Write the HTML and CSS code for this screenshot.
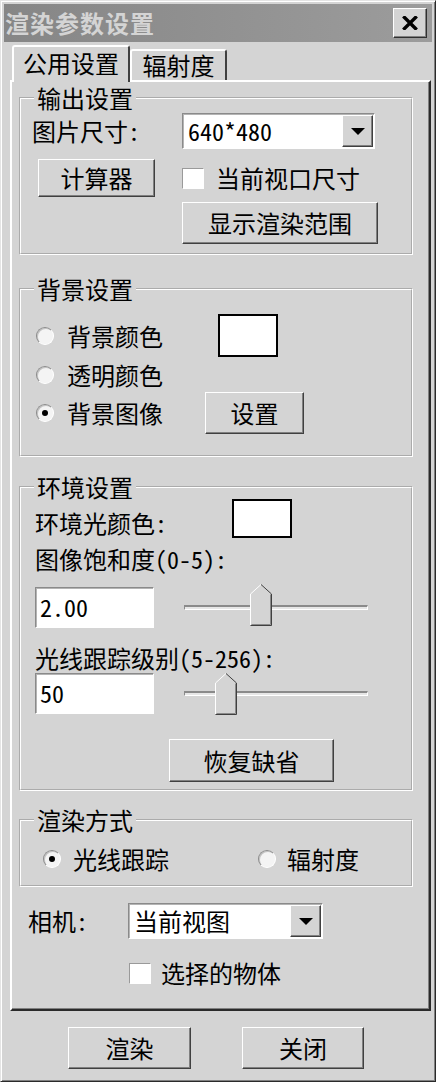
FILE: index.html
```html
<!DOCTYPE html>
<html lang="zh-CN">
<head>
<meta charset="utf-8">
<title>渲染参数设置</title>
<link rel="stylesheet" href="styles.css">
</head>
<body>
<div class="window">
  <div class="titlebar">
    <span class="title">渲染参数设置</span>
    <span class="close-btn">
      <svg width="16" height="14" viewBox="0 0 16 14"><path d="M2.5 1.5 L13.5 12.5 M13.5 1.5 L2.5 12.5" stroke="#000" stroke-width="3.4" stroke-linecap="square"/></svg>
    </span>
  </div>

  <div class="tabs">
    <div class="tab tab-active">公用设置</div>
    <div class="tab tab-2">辐射度</div>
  </div>

  <div class="panel">
    <fieldset class="group g1">
      <legend>输出设置</legend>
      <div class="body b1">
        <div class="row r1a">
          <span class="lbl w-size">图片尺寸:</span>
          <div class="combo combo-size">
            <span class="combo-val">640*480</span>
            <span class="drop"><svg width="14" height="7" viewBox="0 0 14 7"><polygon points="0,0 14,0 7,7" fill="#000"/></svg></span>
          </div>
        </div>
        <div class="row r1b">
          <span class="btn btn-calc">计算器</span>
          <span class="chk chk-view"></span>
          <span class="chk-label">当前视口尺寸</span>
        </div>
        <div class="row r1c">
          <span class="btn btn-show">显示渲染范围</span>
        </div>
      </div>
    </fieldset>

    <fieldset class="group g2">
      <legend>背景设置</legend>
      <div class="body b2">
        <div class="row r2a">
          <span class="opt opt-w1"><span class="radio"></span><span class="opt-text">背景颜色</span></span>
          <span class="swatch swatch-bg"></span>
        </div>
        <div class="row r2b">
          <span class="opt"><span class="radio"></span><span class="opt-text">透明颜色</span></span>
        </div>
        <div class="row r2c">
          <span class="opt opt-w3"><span class="radio on"></span><span class="opt-text">背景图像</span></span>
          <span class="btn btn-set">设置</span>
        </div>
      </div>
    </fieldset>

    <fieldset class="group g3">
      <legend>环境设置</legend>
      <div class="body b3">
        <div class="row r3a">
          <span class="lbl w-amb amb-label">环境光颜色:</span>
          <span class="swatch swatch-amb"></span>
        </div>
        <div class="row r3b">
          <span class="lbl">图像饱和度(0-5):</span>
        </div>
        <div class="row r3c">
          <span class="edit">2.00</span>
          <div class="slider">
            <div class="track"></div>
            <svg class="thumb thumb-a" style="left:66px" width="22" height="42" viewBox="0 0 22 42">
              <polygon points="0.5,10 11,0.5 21.5,10 21.5,41.5 0.5,41.5" fill="#d4d4d4"/>
              <polyline points="0.5,41 0.5,10 11,0.5" fill="none" stroke="#fff"/>
              <polyline points="11,0.5 21.5,10 21.5,41.5 0.5,41.5" fill="none" stroke="#404040"/>
              <polyline points="20.5,10.5 20.5,40.5 1.5,40.5" fill="none" stroke="#8a8a8a"/>
            </svg>
          </div>
        </div>
        <div class="row r3d">
          <span class="lbl">光线跟踪级别(5-256):</span>
        </div>
        <div class="row r3e">
          <span class="edit">50</span>
          <div class="slider">
            <div class="track"></div>
            <svg class="thumb thumb-b" style="left:31px" width="22" height="42" viewBox="0 0 22 42">
              <polygon points="0.5,10 11,0.5 21.5,10 21.5,41.5 0.5,41.5" fill="#d4d4d4"/>
              <polyline points="0.5,41 0.5,10 11,0.5" fill="none" stroke="#fff"/>
              <polyline points="11,0.5 21.5,10 21.5,41.5 0.5,41.5" fill="none" stroke="#404040"/>
              <polyline points="20.5,10.5 20.5,40.5 1.5,40.5" fill="none" stroke="#8a8a8a"/>
            </svg>
          </div>
        </div>
        <div class="row r3f">
          <span class="btn btn-reset">恢复缺省</span>
        </div>
      </div>
    </fieldset>

    <fieldset class="group g4">
      <legend>渲染方式</legend>
      <div class="body b4">
        <div class="row r4a">
          <span class="opt opt-w4"><span class="radio on"></span><span class="opt-text opt-text-sm">光线跟踪</span></span>
          <span class="opt"><span class="radio"></span><span class="opt-text opt-text-xs">辐射度</span></span>
        </div>
      </div>
    </fieldset>

    <div class="row cam-row">
      <span class="lbl w-cam">相机:</span>
      <div class="combo combo-cam">
        <span class="combo-val">当前视图</span>
        <span class="drop"><svg width="14" height="7" viewBox="0 0 14 7"><polygon points="0,0 14,0 7,7" fill="#000"/></svg></span>
      </div>
    </div>
    <div class="row sel-row">
      <span class="chk chk-sel"></span>
      <span class="chk-label sel-label">选择的物体</span>
    </div>
  </div>

  <div class="footer">
    <span class="btn btn-render">渲染</span>
    <span class="btn btn-close">关闭</span>
  </div>
</div>
</body>
</html>
```

FILE: styles.css
```css
* { box-sizing: border-box; }
html, body { margin: 0; padding: 0; }
body {
  background: #d4d4d4;
  font-family: "Noto Sans Mono CJK SC", "Noto Sans CJK SC", "Noto Sans", sans-serif;
  font-size: 24px;
  line-height: 28px;
  color: #000;
}

.window {
  width: 436px;
  height: 1082px;
  border: 1px solid;
  border-color: #e4e4e4 #2a2a2a #2a2a2a #e4e4e4;
  box-shadow: inset 1px 1px 0 #fff, inset -1px -1px 0 #808080;
  padding: 3px 3px 0 3px;
  overflow: hidden;
}

/* title bar */
.titlebar {
  height: 38px;
  background: linear-gradient(to right, #868686, #9c9c9c);
  display: flex;
  align-items: center;
  justify-content: space-between;
  padding: 0 5px 0 1px;
}
.title {
  font-weight: 700;
  color: #d4d4d4;
  letter-spacing: 1px;
  line-height: 30px;
}
.close-btn {
  width: 34px;
  height: 30px;
  background: #d4d4d4;
  border: 1px solid;
  border-color: #fff #303030 #303030 #fff;
  box-shadow: inset -1px -1px 0 #808080;
  display: flex;
  align-items: center;
  justify-content: center;
}

/* tabs */
.tabs {
  display: flex;
  align-items: flex-start;
  height: 37px;
  margin-top: 3px;
  padding-left: 8px;
}
.tab {
  position: relative;
  height: 31px;
  margin-top: 4px;
  border: 2px solid;
  border-color: #fff #404040 transparent #fff;
  border-bottom: 0;
  border-radius: 3px 3px 0 0;
  text-align: center;
  line-height: 28px;
  background: #d4d4d4;
}
.tab-active {
  width: 118px;
  height: 37px;
  margin-top: 0;
  z-index: 1;
  line-height: 32px;
}
.tab-2 { width: 97px; }

/* panel */
.panel {
  margin: -2px 1px 0 6px;
  border: 2px solid;
  border-color: #fff #2a2a2a #2a2a2a #fff;
  box-shadow: inset -1px -1px 0 #808080;
  padding: 0 0 22px 7px;
}

/* group boxes */
.group {
  margin: 0;
  padding: 0;
  width: 394px;
  min-width: 0;
  border: 2px groove #fff;
}
.group legend {
  margin-left: 13px;
  padding: 0 3px;
  line-height: 24px;
}
.g1 { margin-top: 4px; }
.g2 { margin-top: 22px; }
.g3 { margin-top: 18px; }
.g4 { margin-top: 17px; }

.row { display: flex; align-items: center; }
.lbl { flex: none; white-space: nowrap; }

/* group 1 */
.b1 { padding: 3px 0 9px 0; }
.r1a { height: 36px; padding-left: 11px; }
.w-size { width: 150px; }
.r1b { height: 38px; margin-top: 10px; padding-left: 17px; }
.btn-calc { width: 117px; height: 38px; }
.chk-view { margin-left: 27px; }
.chk-label { margin-left: 12px; }
.r1c { height: 42px; margin-top: 5px; padding-left: 161px; }
.btn-show { width: 196px; height: 42px; }

/* group 2 */
.b2 { padding: 13px 0 21px 15px; }
.r2a { height: 43px; }
.r2b { height: 35px; }
.r2c { height: 42px; }
.opt { display: flex; align-items: center; flex: none; }
.opt-w1 { width: 182px; }
.opt-w3 { width: 169px; }
.opt-text { margin-left: 13px; }
.swatch {
  flex: none;
  background: #fff;
  border: 2px solid #000;
}
.swatch-bg { width: 60px; height: 43px; }
.btn-set { width: 99px; height: 42px; }

/* group 3 */
.b3 { padding: 0 0 7px 14px; }
.r3a { height: 39px; align-items: flex-start; }
.amb-label { margin-top: 10px; }
.w-amb { width: 197px; }
.swatch-amb { width: 60px; height: 39px; }
.r3b { height: 28px; margin-top: 7px; }
.r3c { height: 41px; margin-top: 14px; }
.r3d { height: 28px; margin-top: 16px; }
.r3e { height: 41px; margin-top: 1px; }
.r3f { height: 43px; margin-top: 25px; padding-left: 134px; }
.btn-reset { width: 165px; height: 43px; }

.edit {
  flex: none;
  width: 119px;
  height: 41px;
  background: #fff;
  border: 1px solid;
  border-color: #8a8a8a #fff #fff #8a8a8a;
  box-shadow: inset 1px 1px 0 #b4b4b4;
  padding-left: 4px;
  line-height: 38px;
}

.slider {
  position: relative;
  flex: none;
  width: 184px;
  height: 41px;
  margin-left: 30px;
  display: flex;
  align-items: center;
}
.track {
  width: 100%;
  height: 5px;
  border: 1px solid;
  border-color: #8a8a8a #fff #fff #8a8a8a;
  border-top-width: 2px;
  background: #e6e6e6;
}
.thumb { position: absolute; }
.thumb-a { top: -3px; }
.thumb-b { top: 0; }

/* group 4 */
.b4 { padding: 13px 0 12px 22px; }
.r4a { height: 28px; }
.opt-w4 { width: 215px; }
.opt-text-sm { margin-left: 12px; }
.opt-text-xs { margin-left: 11px; }

/* camera */
.cam-row { height: 36px; margin-top: 16px; padding-left: 9px; }
.w-cam { width: 100px; }
.sel-row { height: 28px; margin-top: 20px; padding-left: 110px; }
.chk-sel { width: 21px; height: 20px; }
.sel-label { margin-left: 10px; }

/* controls */
.btn {
  flex: none;
  display: flex;
  align-items: center;
  justify-content: center;
  background: #d4d4d4;
  border: 1px solid;
  border-color: #fff #404040 #404040 #fff;
  box-shadow: inset -1px -1px 0 #808080;
  white-space: nowrap;
}

.combo {
  flex: none;
  display: flex;
  height: 36px;
  background: #fff;
  border: 1px solid;
  border-color: #8a8a8a #fff #fff #8a8a8a;
  box-shadow: inset 1px 1px 0 #b4b4b4;
  padding: 1px;
}
.combo-size { width: 193px; }
.combo-cam { width: 195px; }
.combo-val {
  flex: 1;
  padding-left: 4px;
  line-height: 32px;
  white-space: nowrap;
}
.drop {
  flex: none;
  width: 31px;
  display: flex;
  align-items: center;
  justify-content: center;
  background: #d4d4d4;
  border: 1px solid;
  border-color: #fff #404040 #404040 #fff;
  box-shadow: inset -1px -1px 0 #808080;
}

.chk {
  flex: none;
  width: 22px;
  height: 21px;
  background: #fff;
  border: 1px solid;
  border-color: #9a9a9a #fff #fff #9a9a9a;
}

.radio {
  position: relative;
  flex: none;
  width: 18px;
  height: 18px;
  border-radius: 50%;
  background: #f4f4f4;
  border: 1px solid;
  border-color: #8a8a8a #fff #fff #8a8a8a;
  box-shadow: inset 1px 1px 0 #c4c4c4;
}
.radio.on::after {
  content: "";
  position: absolute;
  left: 5px;
  top: 5px;
  width: 6px;
  height: 6px;
  border-radius: 50%;
  background: #000;
}

/* footer */
.footer {
  display: flex;
  margin-top: 16px;
  padding-left: 64px;
}
.btn-render { width: 123px; height: 42px; }
.btn-close { width: 122px; height: 42px; margin-left: 51px; }
```
